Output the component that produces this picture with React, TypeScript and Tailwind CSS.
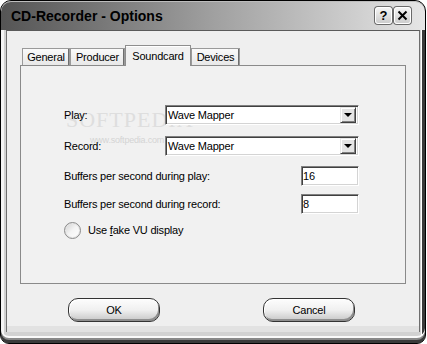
import type { ReactNode } from "react"

function TitleButton({ children }: { children: ReactNode }) {
  return (
    <div className="flex h-[17px] w-[17px] items-center justify-center rounded-[3px] border border-white bg-gradient-to-b from-[#f4f4f4] to-[#cdcdcd] shadow-[0_0_0_1px_#6a6a6a]">
      {children}
    </div>
  )
}

function Sunken({ className, children }: { className: string; children: ReactNode }) {
  return (
    <div
      className={`relative z-10 flex h-[20px] items-center border border-t-[#808080] border-l-[#808080] border-r-white border-b-white bg-white shadow-[inset_1px_1px_0_#404040,inset_-1px_-1px_0_#d4d4d4] ${className}`}
    >
      {children}
    </div>
  )
}

function Combo({ value }: { value: string }) {
  return (
    <Sunken className="w-[194px]">
      <span className="flex-1 pl-[2px]">{value}</span>
      <div className="mr-[2px] flex h-[16px] w-[16px] items-center justify-center border border-t-[#e8e8e8] border-l-[#e8e8e8] border-r-[#404040] border-b-[#404040] bg-[#e4e4e4] shadow-[inset_1px_1px_0_#fff,inset_-1px_-1px_0_#808080]">
        <div className="h-0 w-0 border-t-[4px] border-r-[4px] border-l-[4px] border-t-black border-r-transparent border-l-transparent" />
      </div>
    </Sunken>
  )
}

function Tab({ label, width, active }: { label: string; width: string; active?: boolean }) {
  if (active) {
    return (
      <div
        className={`relative z-20 -mb-px flex h-[21px] ${width} items-start justify-center border border-b-0 border-[#8e8e8e] bg-[#f1f1f1] pt-[2px] shadow-[inset_0_1px_0_#fff]`}
      >
        {label}
      </div>
    )
  }
  return (
    <div
      className={`flex h-[17px] ${width} items-center justify-center border border-b-0 border-[#9a9a9a] bg-gradient-to-b from-[#fafafa] to-[#e8e8e8] pt-[1px] shadow-[inset_-1px_0_0_#6e6e6e]`}
    >
      {label}
    </div>
  )
}

function PillButton({ label }: { label: string }) {
  return (
    <div className="flex h-[24px] w-[92px] items-center justify-center rounded-[10px] border border-[#333] bg-gradient-to-b from-[#fdfdfd] via-[#f0f0f0] to-[#c6c6c6] shadow-[inset_1px_1px_0_#fff,inset_-1px_-2px_0_#8e8e8e]">
      {label}
    </div>
  )
}

export default function App() {
  return (
    <div className="h-[344px] w-[427px] bg-white font-['Liberation_Sans',Arial,sans-serif] text-[11px] tracking-[-0.2px] text-black">
      <div className="flex h-[344px] w-[426px] flex-col overflow-hidden rounded-t-[11px] rounded-b-[9px] border border-black bg-[#d2d2d2] shadow-[inset_0_-3px_0_#3a3a3a,inset_0_-5px_0_#8a8a8a,inset_0_-7px_0_#fafafa,inset_3px_0_0_#f4f4f4,inset_-3px_0_0_#3a3a3a,inset_-4px_0_0_#fff]">
        {/* title bar */}
        <div className="flex h-[29px] shrink-0 items-center gap-[2px] rounded-t-[10px] bg-gradient-to-r from-[#555] via-[#a0a0a0] to-[#e6e6e6] pr-[14px] pl-[10px] tracking-normal shadow-[inset_0_1px_0_#bdbdbd]">
          <span className="flex-1 pt-[1px] text-[14px] font-bold">CD-Recorder - Options</span>
          <TitleButton>
            <span className="text-[13px] leading-none font-bold">?</span>
          </TitleButton>
          <TitleButton>
            <svg width="11" height="11" viewBox="0 0 11 11">
              <path d="M1.5 1.5 L9.5 9.5 M9.5 1.5 L1.5 9.5" stroke="black" strokeWidth="2" />
            </svg>
          </TitleButton>
        </div>

        {/* client area */}
        <div className="mx-[5px] flex flex-1 flex-col border-x border-t border-x-[#6e6e6e] border-t-[#5a5a5a] bg-[#efefef] pt-[14px] pl-[13px]">
          <div className="flex h-[20px] items-end pl-[2px]">
            <Tab label="General" width="w-[48px]" />
            <Tab label="Producer" width="w-[55px]" />
            <Tab label="Soundcard" width="w-[66px]" active />
            <Tab label="Devices" width="w-[49px]" />
          </div>

          <div className="relative h-[219px] w-[386px] border border-[#8a8a8a] bg-[#f1f1f1] pt-[39px] pl-[43px]">
            {/* watermark */}
            <div className="absolute top-[37px] left-[45px] font-['Liberation_Serif',serif] text-[22px] tracking-[1px] text-[#dedede]">
              SOFTPEDIA<span className="align-top text-[7px]">™</span>
            </div>
            <div className="absolute top-[68px] left-[69px] text-[9px] text-[#d4d4d4]">www.softpedia.com</div>

            <div className="flex w-[295px] items-center">
              <span className="relative z-10 w-[101px]">Play:</span>
              <Combo value="Wave Mapper" />
            </div>
            <div className="mt-[11px] flex w-[295px] items-center">
              <span className="relative z-10 w-[101px]">Record:</span>
              <Combo value="Wave Mapper" />
            </div>
            <div className="mt-[10px] flex w-[295px] items-center justify-between">
              <span>Buffers per second during play:</span>
              <Sunken className="w-[58px]">
                <span className="pl-[1px]">16</span>
              </Sunken>
            </div>
            <div className="mt-[8px] flex w-[295px] items-center justify-between">
              <span>Buffers per second during record:</span>
              <Sunken className="w-[58px]">
                <span className="pl-[1px]">8</span>
              </Sunken>
            </div>
            <div className="mt-[8px] flex items-center gap-[7px]">
              <div className="h-[17px] w-[17px] rounded-full border border-[#8a8a8a] bg-gradient-to-br from-[#cfcfcf] via-[#f4f4f4] to-white shadow-[inset_0_0_0_1px_#e6e6e6]" />
              <span>
                Use <span className="underline">f</span>ake VU display
              </span>
            </div>
          </div>

          <div className="mt-[14px] flex gap-[103px] pl-[48px]">
            <PillButton label="OK" />
            <PillButton label="Cancel" />
          </div>
        </div>

        {/* bottom frame */}
        <div className="h-[17px] shrink-0">
          <div className="mx-[5px] h-[6px] border-x border-[#6e6e6e] bg-[#e2e2e2]" />
        </div>
      </div>
    </div>
  )
}
